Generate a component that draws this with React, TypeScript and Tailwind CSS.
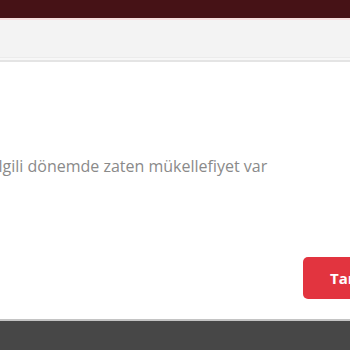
function App(): React.ReactElement {
  return (
    <div className="flex h-[350px] w-[350px] flex-col overflow-hidden bg-white font-['Open_Sans',sans-serif]">
      <div className="h-[18px] shrink-0 bg-[#461216]" />
      <div className="h-[2px] shrink-0 bg-[#f6dede]" />
      <div className="h-[38px] shrink-0 border-b border-[#ebebeb] bg-[#f3f3f3]" />
      <div className="h-[4px] shrink-0 border-b-2 border-[#e4e4e4] bg-[#f7f7f7]" />
      <div className="flex flex-1 flex-col">
        <p className="mt-[94px] ml-[-6px] whitespace-nowrap text-[16px] leading-5 text-[#8a8a8a]">
          İlgili dönemde zaten mükellefiyet var
        </p>
        <div className="mt-[81px] flex justify-start pl-[303px]">
          <button className="h-[42px] shrink-0 whitespace-nowrap rounded-[5px] bg-[#e2343f] pl-[27px] pr-6 text-[15px] font-bold text-white">
            Tamam
          </button>
        </div>
      </div>
      <div className="h-[2px] shrink-0 bg-[#c4c4c4]" />
      <div className="h-[29px] shrink-0 bg-[#474747]" />
    </div>
  )
}

export default App
